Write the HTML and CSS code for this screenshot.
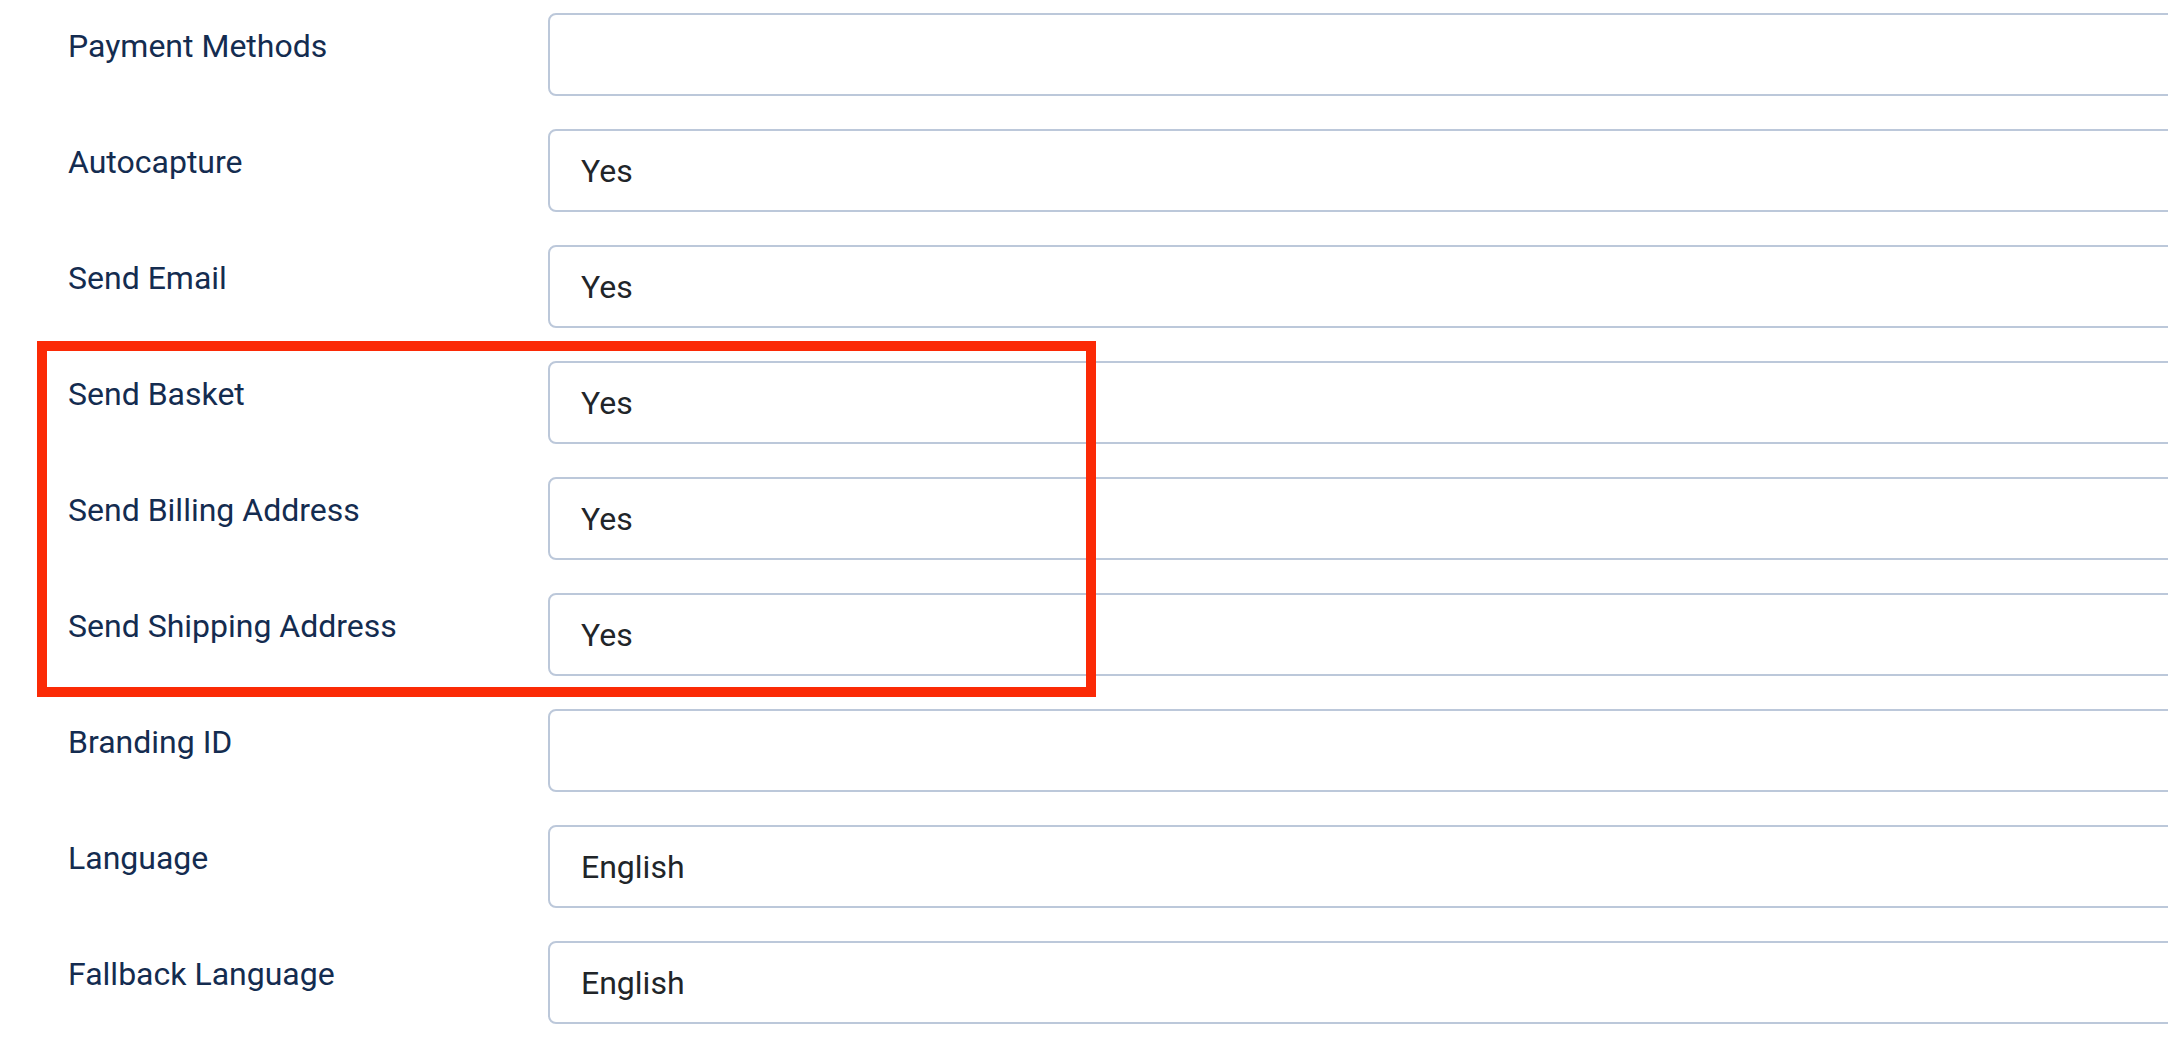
FILE: index.html
```html
<!DOCTYPE html>
<html lang="en">
<head>
<meta charset="utf-8">
<title>Payment settings</title>
<link rel="stylesheet" href="styles.css">
</head>
<body>
<div class="form">
  <div class="row"><div class="label">Payment Methods</div><div class="field"></div></div>
  <div class="row"><div class="label">Autocapture</div><div class="field">Yes</div></div>
  <div class="row"><div class="label">Send Email</div><div class="field">Yes</div></div>
  <div class="row"><div class="label">Send Basket</div><div class="field">Yes</div></div>
  <div class="row"><div class="label">Send Billing Address</div><div class="field">Yes</div></div>
  <div class="row"><div class="label">Send Shipping Address</div><div class="field">Yes</div></div>
  <div class="row"><div class="label">Branding ID</div><div class="field"></div></div>
  <div class="row"><div class="label">Language</div><div class="field">English</div></div>
  <div class="row"><div class="label">Fallback Language</div><div class="field">English</div></div>
  <div class="highlight"></div>
</div>
</body>
</html>
```
FILE: styles.css
```css
html, body {
  margin: 0;
  padding: 0;
  background: #ffffff;
  overflow: hidden;
}
.form {
  position: relative;
  display: flex;
  flex-direction: column;
  gap: 33px;
  padding: 13px 0 0 68px;
  font-family: Roboto, "Liberation Sans", sans-serif;
}
.row {
  display: flex;
  align-items: flex-start;
}
.label {
  width: 480px;
  flex: none;
  padding-top: 15px;
  font-size: 32px;
  line-height: 36px;
  font-weight: 400;
  color: #142c50;
}
.field {
  flex: 1;
  margin-right: -40px;
  height: 83px;
  box-sizing: border-box;
  border: 2px solid #bcc8da;
  border-radius: 8px;
  padding: 0 31px;
  display: flex;
  align-items: center;
  font-size: 32px;
  color: #212529;
}
.highlight {
  position: absolute;
  left: 37px;
  top: 341px;
  width: 1059px;
  height: 356px;
  box-sizing: border-box;
  border: 10px solid #fb2a06;
  pointer-events: none;
}
```
